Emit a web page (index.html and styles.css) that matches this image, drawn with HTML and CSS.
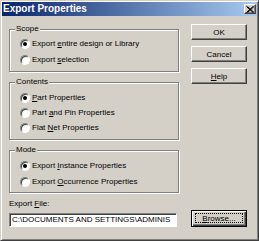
FILE: index.html
```html
<!DOCTYPE html>
<html lang="en">
<head>
    <meta charset="UTF-8">
    <title>Export Properties</title>
    <link rel="stylesheet" href="styles.css">
</head>
<body>
    <div class="window">
        <div class="titlebar">
            <span class="title">Export Properties</span>
            <span class="close">
                <svg width="8" height="7" viewBox="0 0 8 7">
                    <path d="M0.5 0.5 L7 6.5 M1.5 0.5 L8 6.5 M7 0.5 L0.5 6.5 M8 0.5 L1.5 6.5" stroke="#000" stroke-width="1"/>
                </svg>
            </span>
        </div>

        <div class="dialog">
            <div class="groups">
                <fieldset class="group scope">
                    <legend>Scope</legend>
                    <div class="option"><span class="radio checked"></span><span>Export <u>e</u>ntire design or Library</span></div>
                    <div class="option"><span class="radio"></span><span>Export <u>s</u>election</span></div>
                </fieldset>

                <fieldset class="group contents">
                    <legend>Contents</legend>
                    <div class="option"><span class="radio checked"></span><span><u>P</u>art Properties</span></div>
                    <div class="option"><span class="radio"></span><span>Part <u>a</u>nd Pin Properties</span></div>
                    <div class="option"><span class="radio"></span><span>Flat <u>N</u>et Properties</span></div>
                </fieldset>

                <fieldset class="group mode">
                    <legend>Mode</legend>
                    <div class="option"><span class="radio checked"></span><span>Export <u>I</u>nstance Properties</span></div>
                    <div class="option"><span class="radio"></span><span>Export <u>O</u>ccurrence Properties</span></div>
                </fieldset>
            </div>

            <div class="actions">
                <button class="btn">OK</button>
                <button class="btn">Cancel</button>
                <button class="btn"><u>H</u>elp</button>
            </div>

            <div class="file-field">
                <div class="file-label">Export <u>F</u>ile:</div>
                <div class="text-box">C:\DOCUMENTS AND SETTINGS\ADMINIS</div>
            </div>

            <button class="btn browse"><span class="focus"><u>B</u>rowse...</span></button>
        </div>
    </div>
</body>
</html>
```

FILE: styles.css
```css
body {
    margin: 0;
    font-family: 'Liberation Sans', Arial, sans-serif;
    font-size: 8px;
    color: #000;
    background: #d4d0c8;
}

.window {
    width: 259px;
    height: 241px;
    box-sizing: border-box;
    background: #d4d0c8;
    border: 1px solid;
    border-color: #d4d0c8 #404040 #404040 #d4d0c8;
    padding: 1px;
    box-shadow: inset 1px 1px 0 #fff, inset -1px -1px 0 #808080;
}

.titlebar {
    height: 14px;
    display: flex;
    align-items: center;
    justify-content: space-between;
    padding: 0 1px 0 1px;
    background: linear-gradient(to right, #0a246a, #a6caf0);
}

.title {
    color: #fff;
    font-weight: bold;
    font-size: 10px;
    line-height: 14px;
}

.close {
    width: 12px;
    height: 10px;
    box-sizing: border-box;
    display: flex;
    align-items: center;
    justify-content: center;
    background: #d4d0c8;
    border: 1px solid;
    border-color: #fff #404040 #404040 #fff;
    box-shadow: inset -1px -1px 0 #808080;
}

.dialog {
    display: grid;
    grid-template-columns: 170px 56px;
    column-gap: 12px;
    padding-left: 7px;
}

.groups {
    padding-top: 8px;
}

.group {
    margin: 0;
    padding: 0;
    border: 1px solid #808080;
    box-shadow: 1px 1px 0 #fff, inset 1px 1px 0 #fff;
    min-width: 0;
}

.group legend {
    margin-left: 5px;
    padding: 0 1px;
    line-height: 10px;
    background: #d4d0c8;
}

.group + .group {
    margin-top: 5px;
}

.scope {
    padding: 2px 0 4px;
}

.contents {
    padding: 3px 0 4px;
}

.mode {
    padding: 3px 0 3px;
}

.scope .option + .option,
.mode .option + .option {
    margin-top: 1px;
}

.option {
    height: 15px;
    display: flex;
    align-items: center;
    padding-left: 10px;
    white-space: nowrap;
}

.radio {
    width: 10px;
    height: 10px;
    box-sizing: border-box;
    margin-right: 2px;
    border-radius: 50%;
    background: #fff;
    border: 1px solid;
    border-color: #808080 #fff #fff #808080;
    box-shadow: inset 1px 1px 0 #404040;
    display: flex;
    align-items: center;
    justify-content: center;
}

.radio.checked::after {
    content: '';
    width: 4px;
    height: 4px;
    border-radius: 50%;
    background: #000;
}

.actions {
    padding-top: 8px;
    display: flex;
    flex-direction: column;
    gap: 6px;
}

.btn {
    height: 16px;
    box-sizing: border-box;
    margin: 0;
    padding: 0;
    font-family: inherit;
    font-size: 8px;
    color: #000;
    background: #d4d0c8;
    border: 1px solid;
    border-color: #fff #404040 #404040 #fff;
    box-shadow: inset -1px -1px 0 #808080;
}

.file-field {
    padding-top: 6px;
}

.file-label {
    line-height: 10px;
}

.text-box {
    margin-top: 4px;
    width: 168px;
    height: 14px;
    box-sizing: border-box;
    border: 1px solid;
    border-color: #808080 #fff #fff #808080;
    box-shadow: inset 1px 1px 0 #404040;
    background: #fff;
    padding-left: 2px;
    line-height: 12px;
    white-space: nowrap;
    overflow: hidden;
}

.browse {
    align-self: end;
    height: 17px;
    border: 1px solid #000;
    box-shadow: inset 1px 1px 0 #fff, inset -1px -1px 0 #404040, inset -2px -2px 0 #808080;
    padding: 2px 3px 3px;
    display: flex;
}

.browse .focus {
    flex: 1;
    border: 1px dotted #000;
    line-height: 9px;
    text-align: center;
}
```
